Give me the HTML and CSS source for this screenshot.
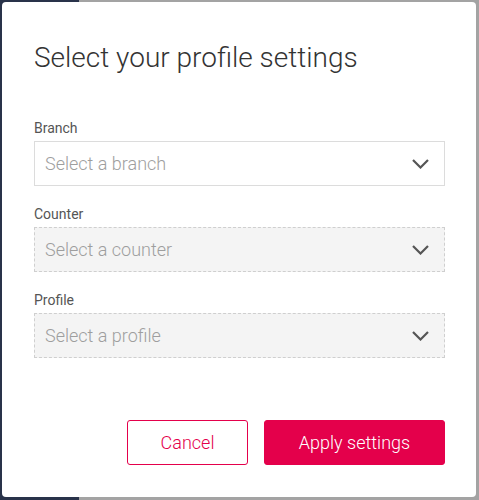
FILE: index.html
```html
<!DOCTYPE html>
<html lang="en">
<head>
<meta charset="utf-8">
<title>Select your profile settings</title>
<link rel="stylesheet" href="styles.css">
</head>
<body>
<div class="page">
  <div class="sidebar"></div>
  <div class="main"></div>
</div>
<div class="modal" role="dialog" aria-labelledby="modal-title">
  <h1 class="modal-title" id="modal-title">Select your profile settings</h1>
  <div class="fields">
    <div class="field">
      <label class="field-label">Branch</label>
      <div class="select">
        <span class="placeholder">Select a branch</span>
        <svg class="chevron" width="17" height="10" viewBox="0 0 17 10"><path d="M1 1 L8.5 8.5 L16 1" fill="none" stroke="#555" stroke-width="2.2"/></svg>
      </div>
    </div>
    <div class="field">
      <label class="field-label">Counter</label>
      <div class="select disabled">
        <span class="placeholder">Select a counter</span>
        <svg class="chevron" width="17" height="10" viewBox="0 0 17 10"><path d="M1 1 L8.5 8.5 L16 1" fill="none" stroke="#555" stroke-width="2.2"/></svg>
      </div>
    </div>
    <div class="field">
      <label class="field-label">Profile</label>
      <div class="select disabled">
        <span class="placeholder">Select a profile</span>
        <svg class="chevron" width="17" height="10" viewBox="0 0 17 10"><path d="M1 1 L8.5 8.5 L16 1" fill="none" stroke="#555" stroke-width="2.2"/></svg>
      </div>
    </div>
  </div>
  <div class="actions">
    <button class="btn btn-outline">Cancel</button>
    <button class="btn btn-primary">Apply settings</button>
  </div>
</div>
</body>
</html>
```
FILE: styles.css
```css
html, body {
  margin: 0;
  padding: 0;
}
body {
  font-family: Roboto, "Liberation Sans", sans-serif;
  width: 479px;
  height: 500px;
  overflow: hidden;
  position: relative;
}
.page {
  display: flex;
  height: 500px;
}
.sidebar {
  width: 79px;
  background: #29334a;
}
.main {
  flex: 1;
  background: #a3a3a3;
}
.modal {
  position: absolute;
  top: 2px;
  left: 2px;
  width: 474px;
  height: 495px;
  box-sizing: border-box;
  background: #fff;
  border-radius: 4px;
  padding: 39px 31px 32px 32px;
  display: flex;
  flex-direction: column;
}
.modal-title {
  margin: 0;
  font-size: 28px;
  font-weight: 300;
  color: #333;
  line-height: 33px;
}
.fields {
  margin-top: 46px;
  display: flex;
  flex-direction: column;
  gap: 20px;
}
.field {
  display: flex;
  flex-direction: column;
}
.field-label {
  font-size: 14px;
  line-height: 16px;
  color: #555;
  margin-bottom: 5px;
}
.select {
  height: 45px;
  box-sizing: border-box;
  border: 1px solid #dcdcdc;
  display: flex;
  align-items: center;
  justify-content: space-between;
  padding: 0 15px 0 10px;
  background: #fff;
}
.select.disabled {
  background: #f4f4f4;
  border: 1px dashed #cfcfcf;
}
.placeholder {
  font-size: 18px;
  font-weight: 300;
  color: #9e9e9e;
}
.chevron {
  display: block;
}
.actions {
  margin-top: auto;
  display: flex;
  justify-content: flex-end;
  gap: 16px;
}
.btn {
  height: 45px;
  box-sizing: border-box;
  font-family: Roboto, "Liberation Sans", sans-serif;
  font-size: 18px;
  font-weight: 300;
  border-radius: 3px;
  cursor: pointer;
}
.btn-outline {
  width: 121px;
  background: #fff;
  border: 1px solid #e4004b;
  color: #e4004b;
}
.btn-primary {
  width: 181px;
  background: #e4004b;
  border: 1px solid #e4004b;
  color: #fff;
}
```
